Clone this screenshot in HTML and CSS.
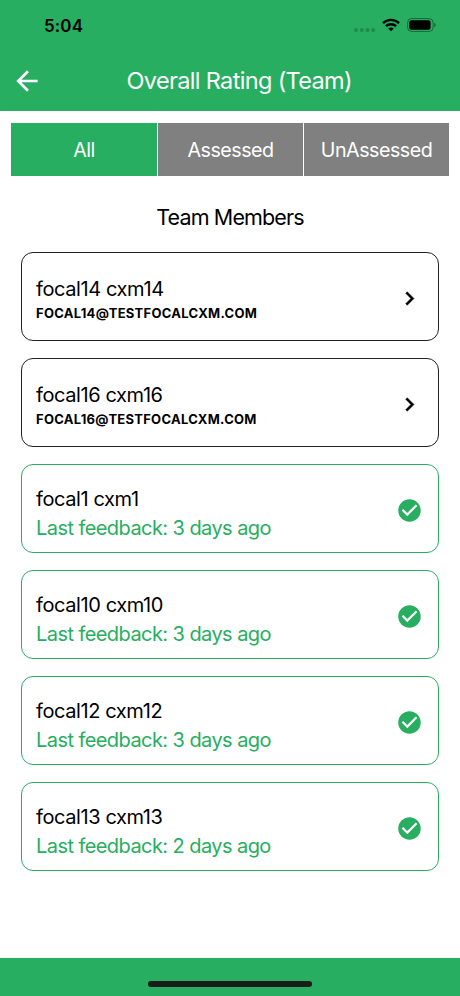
FILE: index.html
```html
<!DOCTYPE html>
<html lang="en">
<head>
<meta charset="utf-8">
<title>Overall Rating (Team)</title>
<link rel="stylesheet" href="styles.css">
</head>
<body>
<svg class="defs" aria-hidden="true">
  <symbol id="chevron" viewBox="0 0 24 24"><path d="M8.6 16.6 13.2 12 8.6 7.4 10 6l6 6-6 6z" stroke="#000" stroke-width=".4" stroke-linejoin="round"/></symbol>
  <symbol id="check" viewBox="0 0 24 24"><path d="M12 2C6.48 2 2 6.48 2 12s4.48 10 10 10 10-4.48 10-10S17.52 2 12 2zm-2 15-5-5 1.41-1.41L10 14.17l7.59-7.59L19 8l-9 9z"/></symbol>
</svg>
<div class="screen">
  <header>
    <div class="status">
      <span class="time">5:04</span>
      <div class="indicators">
        <svg class="dots" width="22" height="4" viewBox="0 0 22 4"><circle cx="2" cy="2" r="1.9"/><circle cx="7.8" cy="2" r="1.9"/><circle cx="13.5" cy="2" r="1.9"/><circle cx="19.2" cy="2" r="1.9"/></svg>
        <svg class="wifi" width="18" height="14" viewBox="0 0 18 14" fill="none" stroke="#000" stroke-width="2.4"><path d="M1 5.1C5.5.8 12.500.8 17 5.100"/><path d="M3.900 8.200c2.900-2.700 7.300-2.700 10.200 0"/><path d="M9 13.300 6.200 10.500c1.500-1.500 4.100-1.500 5.600 0z" fill="#000" stroke="none"/></svg>
        <svg class="battery" width="30" height="14" viewBox="0 0 30 14"><rect x=".6" y=".6" width="25.500" height="12.800" rx="4" fill="none" stroke="#000" stroke-opacity=".4"/><rect x="2.200" y="2.300" width="21.400" height="9.500" rx="2.300"/><path d="M27.300 4.800c2 .8 2 3.600 0 4.400z" opacity=".45"/></svg>
      </div>
    </div>
    <div class="nav">
      <svg class="back" width="32" height="32" viewBox="0 0 24 24"><path d="M20 11H7.830l5.590-5.590L12 4l-8 8 8 8 1.410-1.410L7.830 13H20v-2z"/></svg>
      <h1>Overall Rating (Team)</h1>
    </div>
  </header>
  <main>
    <div class="tabs"><div class="tab active">All</div><div class="tab">Assessed</div><div class="tab">UnAssessed</div></div>
    <h2>Team Members</h2>
    <div class="list">
      <div class="card"><div class="info"><div class="name">focal14 cxm14</div><div class="email">FOCAL14@TESTFOCALCXM.COM</div></div><svg class="icon"><use href="#chevron"/></svg></div>
      <div class="card"><div class="info"><div class="name">focal16 cxm16</div><div class="email">FOCAL16@TESTFOCALCXM.COM</div></div><svg class="icon"><use href="#chevron"/></svg></div>
      <div class="card done"><div class="info"><div class="name">focal1 cxm1</div><div class="feedback">Last feedback: 3 days ago</div></div><svg class="icon"><use href="#check"/></svg></div>
      <div class="card done"><div class="info"><div class="name">focal10 cxm10</div><div class="feedback">Last feedback: 3 days ago</div></div><svg class="icon"><use href="#check"/></svg></div>
      <div class="card done"><div class="info"><div class="name">focal12 cxm12</div><div class="feedback">Last feedback: 3 days ago</div></div><svg class="icon"><use href="#check"/></svg></div>
      <div class="card done"><div class="info"><div class="name">focal13 cxm13</div><div class="feedback">Last feedback: 2 days ago</div></div><svg class="icon"><use href="#check"/></svg></div>
    </div>
  </main>
  <footer><div class="home"></div></footer>
</div>
</body>
</html>
```
FILE: styles.css
```css
* { box-sizing: border-box; }
body { margin: 0; font-family: Inter, "Liberation Sans", sans-serif; color: #000; }
.defs { display: none; }
.screen { width: 460px; height: 996px; display: flex; flex-direction: column; background: #fff; }
header { height: 111px; background: #27ae60; }
.status { height: 50px; padding: 0 23px 0 44px; display: flex; align-items: center; justify-content: space-between; }
.time { font-size: 17px; font-weight: 600; letter-spacing: 0.1px; line-height: 20px; padding-top: 2px; }
.indicators { display: flex; align-items: center; }
.dots { margin: 10px 6px 0 0; fill: #1f8a4c; }
.wifi { margin-right: 7px; }
.nav { height: 61px; padding-left: 11px; display: flex; align-items: center; }
.back { fill: #fff; flex: none; }
h1 { margin: 0 0 0 83.5px; font-size: 23.5px; font-weight: 400; letter-spacing: -0.65px; line-height: 28px; color: #fff; white-space: nowrap; }
main { flex: 1; }
.tabs { display: grid; grid-template-columns: 146px 145px 1fr; gap: 1px; margin: 12px 11px 0; height: 53px; }
.tab { display: flex; align-items: center; justify-content: center; background: #808080; color: #fff; font-size: 19.7px; letter-spacing: -0.5px; }
.tab.active { background: #27ae60; }
h2 { margin: 27px 0 0; font-size: 21.5px; font-weight: 400; letter-spacing: -0.85px; line-height: 28px; text-align: center; }
.list { margin: 21px 21px 0; display: flex; flex-direction: column; gap: 17px; }
.card { height: 89px; border: 1.4px solid #222; border-radius: 12px; padding: 0 15.5px 0 14px; display: flex; align-items: center; justify-content: space-between; }
.card.done { border-color: #27ae60; }
.info { padding-top: 6px; }
.done .info { padding-top: 10px; }
.name { font-size: 20px; letter-spacing: -0.4px; line-height: 26px; }
.email { font-size: 13px; font-weight: 700; letter-spacing: 0.27px; line-height: 20px; margin-top: 1px; }
.feedback { font-size: 20px; letter-spacing: -0.57px; line-height: 26px; margin-top: 3px; color: #27ae60; }
.icon { width: 27px; height: 27px; flex: none; margin-top: 4px; }
.done .icon { fill: #27ae60; margin-top: 3px; }
footer { height: 38px; background: #27ae60; display: flex; justify-content: center; align-items: flex-end; padding-bottom: 9px; }
.home { width: 164px; height: 6px; border-radius: 3px; background: #171d19; }
```
